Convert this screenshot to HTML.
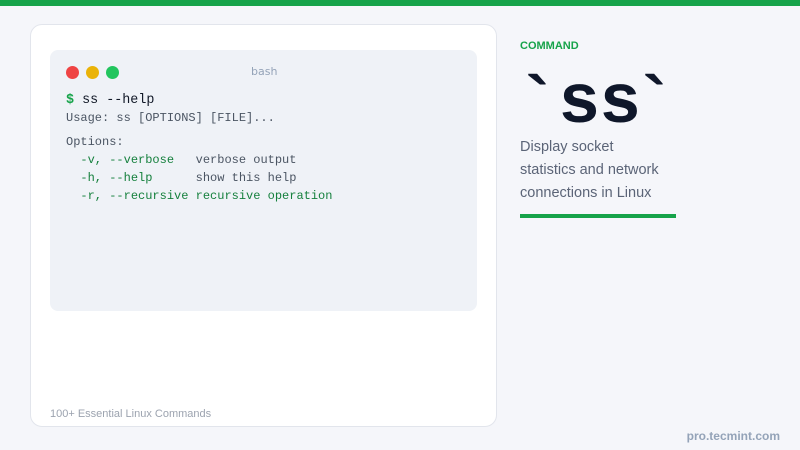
<!DOCTYPE html>
<html><head><meta charset="utf-8"><style>
*{margin:0;padding:0;box-sizing:border-box}
body{width:800px;height:450px;background:#f5f6fa;position:relative;overflow:hidden;font-family:"Liberation Sans",sans-serif}
.top{position:absolute;left:0;top:0;width:800px;height:6px;background:#16a34a}
.card{position:absolute;left:30px;top:24px;width:467px;height:403px;background:#fff;border:1px solid #e2e5ec;border-radius:12px}
.term{position:absolute;left:50px;top:50px;width:427px;height:261px;background:#eff2f7;border-radius:8px}
.dot{position:absolute;top:66px;width:13px;height:13px;border-radius:50%}
.mono{font-family:"Liberation Mono",monospace;position:absolute;white-space:pre;font-size:12px;color:#4b5563}
.g{color:#15803d}
.bt{position:absolute;font-size:70px;font-weight:bold;color:#0f172a;line-height:70px}
</style></head><body>
<div class="top"></div>
<div class="card"></div>
<div class="term"></div>
<div class="dot" style="left:66px;background:#ef4444"></div>
<div class="dot" style="left:86px;background:#eab308"></div>
<div class="dot" style="left:106px;background:#22c55e"></div>
<div class="mono" style="left:251px;top:65px;font-size:11px;color:#94a3b8;font-family:'DejaVu Sans',sans-serif">bash</div>
<div class="mono" style="left:66px;top:93px;font-size:13.4px;color:#111827"><b style="color:#16a34a">$</b> ss --help</div>
<div class="mono" style="left:66px;top:111px">Usage: ss [OPTIONS] [FILE]...</div>
<div class="mono" style="left:66px;top:135px">Options:</div>
<div class="mono" style="left:66px;top:153px">  <span class="g">-v, --verbose</span>   verbose output</div>
<div class="mono" style="left:66px;top:171px">  <span class="g">-h, --help</span>      show this help</div>
<div class="mono" style="left:66px;top:189px">  <span class="g">-r, --recursive</span> <span class="g">recursive operation</span></div>
<div style="position:absolute;left:50px;top:408px;font-size:11px;color:#9ca3af">100+ Essential Linux Commands</div>
<div style="position:absolute;left:520px;top:40px;font-size:11px;font-weight:bold;color:#16a34a">COMMAND</div>
<div class="bt" style="left:526px;top:66px">`</div>
<div class="bt" style="left:643px;top:66px">`</div>
<div style="position:absolute;left:560px;top:63px;font-size:70px;font-weight:bold;color:#0f172a;letter-spacing:2px;line-height:70px">ss</div>
<div style="position:absolute;left:520px;top:136px;font-size:14.5px;line-height:23px;color:#5b6477;width:152px">Display socket statistics and network connections in Linux</div>
<div style="position:absolute;left:520px;top:214px;width:156px;height:4px;background:#16a34a"></div>
<div style="position:absolute;right:20px;top:429px;font-size:12px;font-weight:bold;color:#94a3b8">pro.tecmint.com</div>
</body></html>
